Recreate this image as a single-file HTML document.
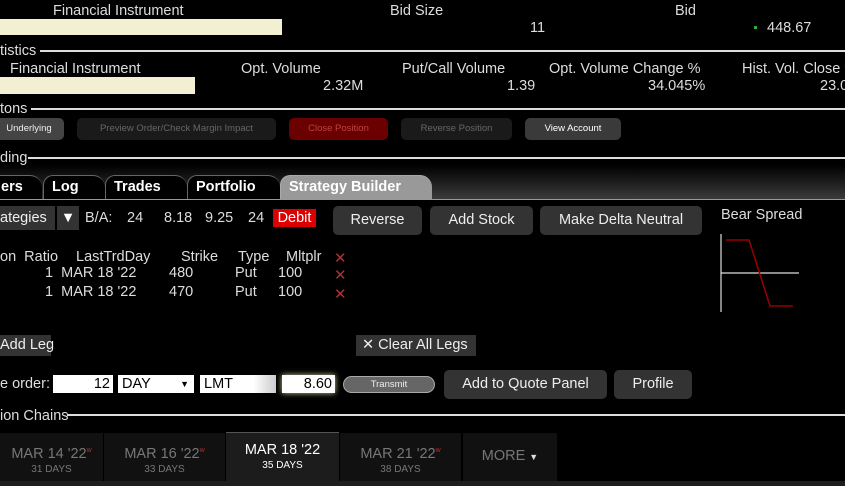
<!DOCTYPE html>
<html><head><meta charset="utf-8"><style>
*{margin:0;padding:0;box-sizing:border-box}
body{width:845px;height:486px;background:#000;color:#ddd;font-family:"Liberation Sans","DejaVu Sans",sans-serif;font-size:14.5px;position:relative;overflow:hidden}
.a{position:absolute;white-space:nowrap}
.hl{position:absolute;height:1.5px;background:#ddd;right:0}
.b{position:absolute;border-radius:5px;font-size:9.5px;text-align:center;line-height:22px;height:22px;top:118px}
.btn{position:absolute;background:#333;border-radius:5px;color:#eee;text-align:center;font-size:14.5px}
.tab{position:absolute;top:175px;height:24px;border-top:1px solid #666;border-left:1px solid #666;border-radius:10px 12px 0 0;color:#fff;font-weight:bold;font-size:14.5px;line-height:22px;padding-left:8px}
.x{color:#a33;font-weight:bold;font-size:15px}
.inp{position:absolute;background:#fff;color:#000;top:375px;height:18px;line-height:18px;font-size:14.5px}
.dt{position:absolute;top:433px;height:48px;background:#111;text-align:center;color:#777;font-size:14.5px;padding-top:10px;line-height:15px}
.dt small{display:block;font-size:10px}
sup{color:#a33;font-size:7px}
</style></head><body>
<div class="a" style="left:53px;top:3px">Financial Instrument</div>
<div class="a" style="left:0;top:19px;width:282px;height:16px;background:#f2efd2"></div>
<div class="a" style="left:390px;top:3px">Bid Size</div>
<div class="a" style="left:530px;top:20px">11</div>
<div class="a" style="left:675px;top:3px">Bid</div>
<div class="a" style="left:754px;top:26px;width:3px;height:3px;background:#3a3"></div>
<div class="a" style="left:767px;top:20px">448.67</div>

<div class="a" style="left:0;top:43px">tistics</div><div class="hl" style="left:40px;top:50px"></div>
<div class="a" style="left:10px;top:61px">Financial Instrument</div>
<div class="a" style="left:0;top:77px;width:195px;height:17px;background:#f2efd2"></div>
<div class="a" style="left:241px;top:61px">Opt. Volume</div>
<div class="a" style="left:323px;top:78px">2.32M</div>
<div class="a" style="left:402px;top:61px">Put/Call Volume</div>
<div class="a" style="left:507px;top:78px">1.39</div>
<div class="a" style="left:549px;top:61px">Opt. Volume Change %</div>
<div class="a" style="left:648px;top:78px">34.045%</div>
<div class="a" style="left:742px;top:61px">Hist. Vol. Close %</div>
<div class="a" style="left:820px;top:78px">23.0</div>

<div class="a" style="left:0;top:101px">tons</div><div class="hl" style="left:31px;top:108px"></div>
<div class="b" style="left:-6px;width:70px;background:#444;color:#eee">Underlying</div>
<div class="b" style="left:77px;width:199px;background:#1a1a1a;color:#666">Preview Order/Check Margin Impact</div>
<div class="b" style="left:289px;width:99px;background:#6a0000;color:#b44">Close Position</div>
<div class="b" style="left:401px;width:111px;background:#1a1a1a;color:#666">Reverse Position</div>
<div class="b" style="left:525px;width:96px;background:#3a3a3a;color:#fff">View Account</div>

<div class="a" style="left:0;top:150px">ding</div><div class="hl" style="left:28px;top:157px"></div>
<div class="a" style="left:0;top:165px;width:845px;height:34px;background:linear-gradient(#000,#3a3a3a)"></div>
<div class="tab" style="left:-20px;width:62px;background:#000;padding-left:20px">ers</div>
<div class="tab" style="left:43px;width:62px;background:#000">Log</div>
<div class="tab" style="left:105px;width:82px;background:#000">Trades</div>
<div class="tab" style="left:187px;width:93px;background:#000">Portfolio</div>
<div class="tab" style="left:280px;width:152px;background:#999;border-color:#aaa">Strategy Builder</div>
<div class="a" style="left:0;top:199px;width:845px;height:1px;background:#999"></div>

<div class="a" style="left:0;top:206px;width:55px;height:24px;background:#333;line-height:24px;color:#eee">ategies</div>
<div class="a" style="left:57px;top:206px;width:22px;height:24px;background:#333;line-height:24px;text-align:center;color:#fff">▼</div>
<div class="a" style="left:85px;top:210px">B/A:</div>
<div class="a" style="left:127px;top:210px">24</div>
<div class="a" style="left:164px;top:210px">8.18</div>
<div class="a" style="left:205px;top:210px">9.25</div>
<div class="a" style="left:248px;top:210px">24</div>
<div class="a" style="left:273px;top:209px;width:43px;height:18px;background:#d00;color:#fff;text-align:center;line-height:18px">Debit</div>
<div class="btn" style="left:333px;top:206px;width:89px;height:29px;line-height:29px">Reverse</div>
<div class="btn" style="left:430px;top:206px;width:103px;height:29px;line-height:29px">Add Stock</div>
<div class="btn" style="left:540px;top:206px;width:162px;height:29px;line-height:29px">Make Delta Neutral</div>
<div class="a" style="left:721px;top:207px">Bear Spread</div>
<svg class="a" style="left:718px;top:234px" width="84" height="80"><path d="M3 0V78M3 39H81" stroke="#ddd" stroke-width="1.2" fill="none"/><path d="M8 6H31L52 72H75" stroke="#900" stroke-width="1.5" fill="none"/></svg>

<div class="a" style="left:0;top:249px">on&nbsp; Ratio</div>
<div class="a" style="left:76px;top:249px">LastTrdDay</div>
<div class="a" style="left:181px;top:249px">Strike</div>
<div class="a" style="left:238px;top:249px">Type</div>
<div class="a" style="left:286px;top:249px">Mltplr</div>
<div class="a x" style="left:334px;top:249px">✕</div>
<div class="a" style="left:45px;top:265px">1&nbsp; MAR 18 '22</div><div class="a" style="left:169px;top:265px">480</div><div class="a" style="left:235px;top:265px">Put</div><div class="a" style="left:278px;top:265px">100</div><div class="a x" style="left:334px;top:266px">✕</div>
<div class="a" style="left:45px;top:284px">1&nbsp; MAR 18 '22</div><div class="a" style="left:169px;top:284px">470</div><div class="a" style="left:235px;top:284px">Put</div><div class="a" style="left:278px;top:284px">100</div><div class="a x" style="left:334px;top:285px">✕</div>

<div class="a" style="left:0;top:335px;width:51px;height:21px;background:#333;line-height:21px;color:#eee">Add Leg</div>
<div class="a" style="left:356px;top:335px;width:120px;height:21px;background:#333;line-height:21px;color:#eee;padding-left:6px">✕ Clear All Legs</div>

<div class="a" style="left:0;top:376px">e order:</div>
<div class="inp" style="left:53px;width:60px;text-align:right;padding-right:3px">12</div>
<div class="inp" style="left:118px;width:76px;padding-left:4px">DAY<span style="position:absolute;right:5px;font-size:9px">▼</span></div>
<div class="inp" style="left:200px;width:76px;padding-left:4px;background:linear-gradient(90deg,#fff 70%,#ccc)">LMT</div>
<div class="inp" style="left:282px;width:53px;text-align:right;padding-right:3px;box-shadow:0 0 6px #cc9">8.60</div>
<div class="a" style="left:343px;top:376px;width:92px;height:17px;border-radius:9px;background:#666;border:1px solid #aaa;color:#eee;font-size:9.5px;text-align:center;line-height:15px">Transmit</div>
<div class="btn" style="left:444px;top:370px;width:163px;height:29px;line-height:29px">Add to Quote Panel</div>
<div class="btn" style="left:614px;top:370px;width:78px;height:29px;line-height:29px">Profile</div>

<div class="a" style="left:0;top:408px">ion Chains</div><div class="hl" style="left:67px;top:414px"></div>
<div class="dt" style="left:0;width:103px">MAR 14 '22<sup>w</sup><small>31 DAYS</small></div>
<div class="dt" style="left:104px;width:121px">MAR 16 '22<sup>w</sup><small>33 DAYS</small></div>
<div class="dt" style="left:226px;width:113px;background:#1c1c1c;border-top:1px solid #555;color:#fff;top:432px;height:49px">MAR 18 '22<small>35 DAYS</small></div>
<div class="dt" style="left:340px;width:121px">MAR 21 '22<sup>w</sup><small>38 DAYS</small></div>
<div class="dt" style="left:463px;width:94px;padding-top:16px">MORE <span style="font-size:9px;color:#ddd">▼</span></div>
<div class="a" style="left:0;top:481px;width:845px;height:5px;background:#1e1e1e"></div>
</body></html>
